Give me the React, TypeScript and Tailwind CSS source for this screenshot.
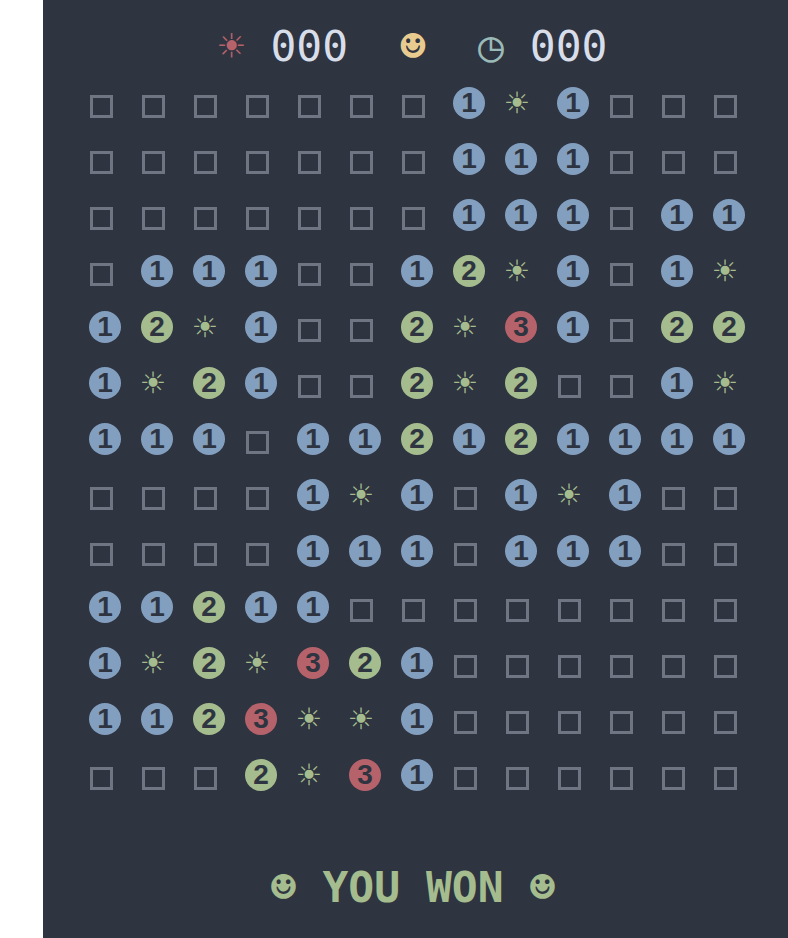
const board = [
  ".......1*1...",
  ".......111...",
  ".......111.11",
  ".111..12*1.1*",
  "12*1..2*31.22",
  "1*21..2*2..1*",
  "111.112121111",
  "....1*1.1*1..",
  "....111.111..",
  "11211........",
  "1*2*321......",
  "1123**1......",
  "...2*31......",
];

const numberColors: Record<string, string> = {
  "1": "bg-[#839fc0]",
  "2": "bg-[#a5bc8e]",
  "3": "bg-[#b6626b]",
};

function Cell({ value }: { value: string }) {
  if (value === "*") return <span className="text-[#a5bc8e]">☀</span>;
  if (value === ".") return <span className="mt-1.5 size-[23px] border-[3px] border-[#6f7583]" />;
  return (
    <span
      className={`ml-2 flex size-8 items-center justify-center rounded-full text-[28px] font-bold leading-none text-[#2e3440] [font-family:'Liberation_Sans',sans-serif] ${numberColors[value]}`}
    >
      {value}
    </span>
  );
}

export default function App() {
  return (
    <div className="min-h-[938px] bg-white pl-[43px] [font-family:'DejaVu_Sans_Mono','DejaVu_Sans',monospace]">
      <div className="h-[938px] overflow-hidden bg-[#2e3440] pl-8">
        <div className="w-[676px]">
          <div className="flex h-[75px] items-center justify-center pt-[18px] text-[43px] leading-none">
            <span className="mr-[26px] text-[#b6626b]">☀</span>
            <span className="text-[#d8dee9]">000</span>
            <span className="mx-[52px] text-[#e9cb90]">☻</span>
            <span className="mr-[26px] text-[#9abab8]">◷</span>
            <span className="text-[#d8dee9]">000</span>
          </div>
          <div className="grid grid-cols-13 text-[38px] leading-[56px]">
            {board.flatMap((row, y) =>
              row.split("").map((value, x) => (
                <div key={`${y}-${x}`} className="flex h-14 items-center justify-center">
                  <Cell value={value} />
                </div>
              )),
            )}
          </div>
          <div className="mt-[63px] text-center text-[43px] font-bold leading-none text-[#a5bc8e]">
            ☻ YOU WON ☻
          </div>
        </div>
      </div>
    </div>
  );
}
